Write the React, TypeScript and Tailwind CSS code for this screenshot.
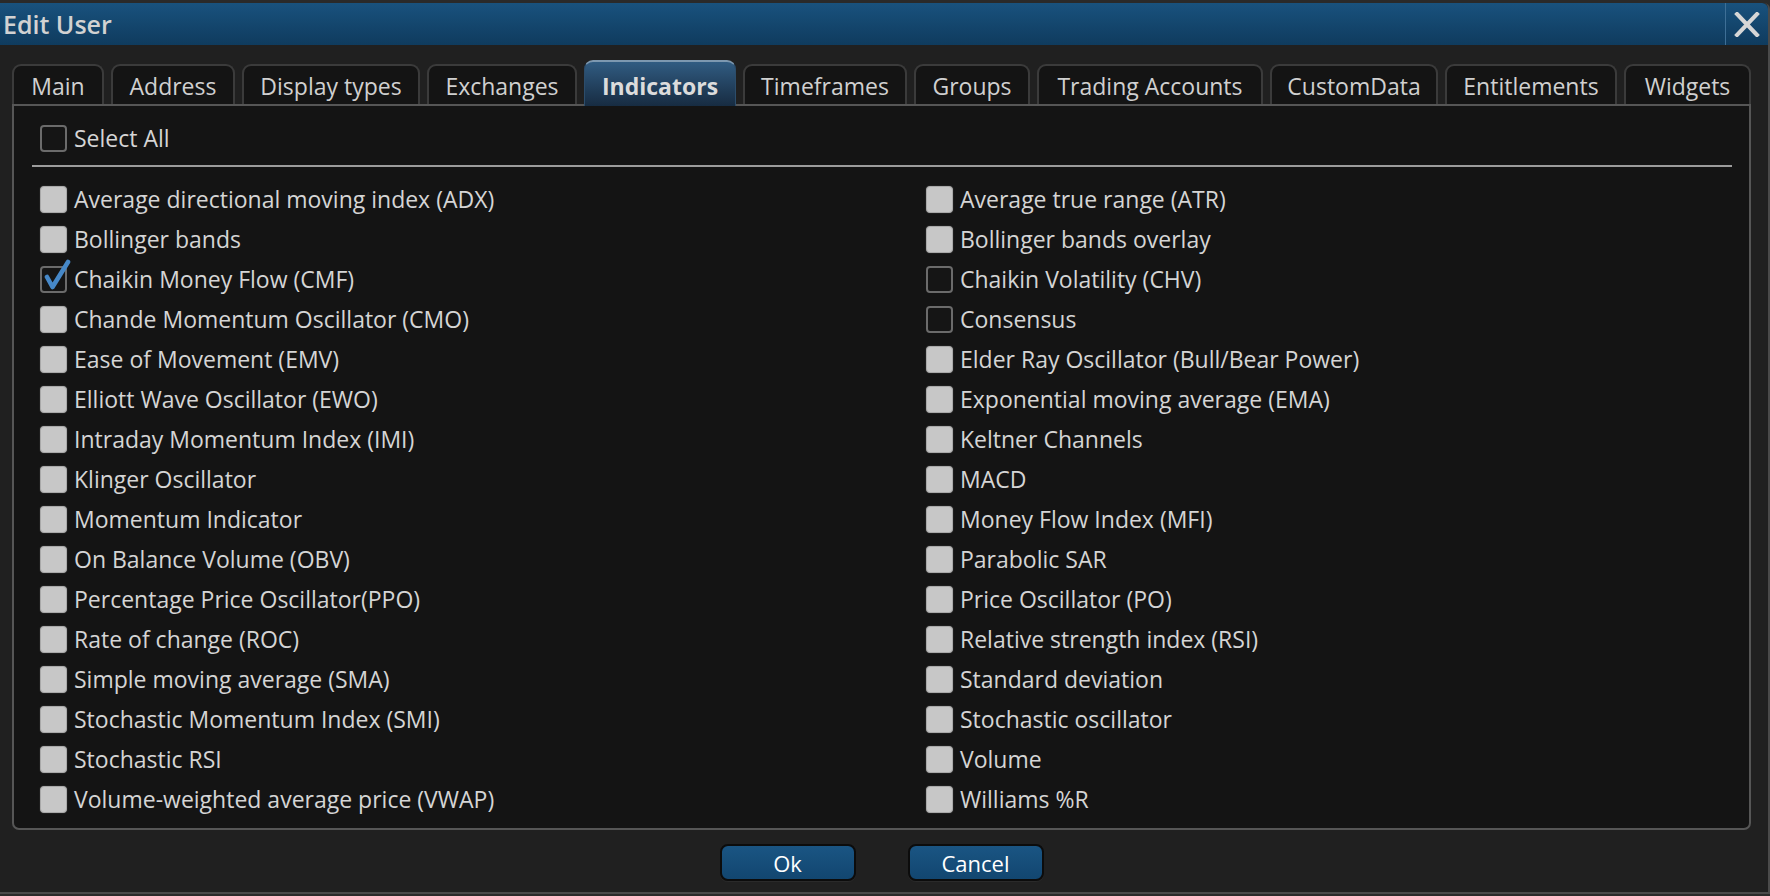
import React from "react";

type BoxState = "off" | "on" | "locked";

const tabs: Array<{ label: string; width: string; active?: boolean }> = [
  { label: "Main", width: "w-[92px]" },
  { label: "Address", width: "w-[124px]" },
  { label: "Display types", width: "w-[178px]" },
  { label: "Exchanges", width: "w-[150px]" },
  { label: "Indicators", width: "w-[152px]", active: true },
  { label: "Timeframes", width: "w-[164px]" },
  { label: "Groups", width: "w-[116px]" },
  { label: "Trading Accounts", width: "w-[226px]" },
  { label: "CustomData", width: "w-[168px]" },
  { label: "Entitlements", width: "w-[172px]" },
  { label: "Widgets", width: "w-[127px]" }
];

// left / right column, read row by row
const rows: Array<[string, BoxState, string, BoxState]> = [
  ["Average directional moving index (ADX)", "locked", "Average true range (ATR)", "locked"],
  ["Bollinger bands", "locked", "Bollinger bands overlay", "locked"],
  ["Chaikin Money Flow (CMF)", "on", "Chaikin Volatility (CHV)", "off"],
  ["Chande Momentum Oscillator (CMO)", "locked", "Consensus", "off"],
  ["Ease of Movement (EMV)", "locked", "Elder Ray Oscillator (Bull/Bear Power)", "locked"],
  ["Elliott Wave Oscillator (EWO)", "locked", "Exponential moving average (EMA)", "locked"],
  ["Intraday Momentum Index (IMI)", "locked", "Keltner Channels", "locked"],
  ["Klinger Oscillator", "locked", "MACD", "locked"],
  ["Momentum Indicator", "locked", "Money Flow Index (MFI)", "locked"],
  ["On Balance Volume (OBV)", "locked", "Parabolic SAR", "locked"],
  ["Percentage Price Oscillator(PPO)", "locked", "Price Oscillator (PO)", "locked"],
  ["Rate of change (ROC)", "locked", "Relative strength index (RSI)", "locked"],
  ["Simple moving average (SMA)", "locked", "Standard deviation", "locked"],
  ["Stochastic Momentum Index (SMI)", "locked", "Stochastic oscillator", "locked"],
  ["Stochastic RSI", "locked", "Volume", "locked"],
  ["Volume-weighted average price (VWAP)", "locked", "Williams %R", "locked"]
];

function Box({ state }: { state: BoxState }) {
  if (state === "locked") {
    return (
      <div className="w-[27px] h-[27px] flex-shrink-0 rounded-[4px] bg-[#c7c7c7] border border-[#a9a9a9] shadow-[0_0_1px_#777]" />
    );
  }
  return (
    <div className="relative w-[27px] h-[27px] flex-shrink-0 rounded-[4px] bg-[#151515] border-2 border-[#6b6b6b]">
      {state === "on" && (
        <svg
          className="absolute left-[1px] top-[-9px]"
          width="28"
          height="34"
          viewBox="0 0 28 34"
          fill="none"
        >
          <path
            d="M4 18 L9.5 28 L25 3"
            stroke="#4688c8"
            strokeWidth="4.6"
            strokeLinejoin="round"
            strokeLinecap="round"
          />
        </svg>
      )}
    </div>
  );
}

function Item({ label, state }: { label: string; state: BoxState }) {
  return (
    <div className="h-[40px] flex items-center gap-[7px]">
      <Box state={state} />
      <span className="text-[23px] leading-none text-[#d5d5d5] whitespace-nowrap">{label}</span>
    </div>
  );
}

export default function App() {
  return (
    <div
      className="w-[1770px] h-[896px] bg-[#2a2a2a] pt-[3px] overflow-hidden"
      style={{ fontFamily: '"Open Sans", "Noto Sans", sans-serif' }}
    >
      <div className="h-[891px] bg-[#202020] border-r-2 border-b-2 border-[#4a4a4a] rounded-tr-[6px] flex flex-col">
        {/* title bar */}
        <div className="h-[42px] flex items-center bg-gradient-to-b from-[#19527e] to-[#0f3b5e] rounded-tr-[6px]">
          <div className="flex-1 pl-[3px] text-[25px] font-semibold text-[#d2d2d2] leading-none">Edit User</div>
          <div className="w-[43px] h-full flex items-center justify-center border-l border-[#3e6f96]">
            <svg width="26" height="25" viewBox="0 0 26 25">
              <path d="M3 2 L23 23 M23 2 L3 23" stroke="#d6d6d6" strokeWidth="4" strokeLinecap="square" />
            </svg>
          </div>
        </div>

        {/* tabs */}
        <div className="flex items-end gap-[7px] pl-[12px] pt-[15px] h-[59px]">
          {tabs.map((t) =>
            t.active ? (
              <div
                key={t.label}
                className={`${t.width} relative z-10 h-[46px] mb-[-2px] flex items-center justify-center rounded-t-[9px] border-t-2 border-x border-[#7d98b0] border-x-[#2c4d6b] bg-gradient-to-b from-[#315c82] to-[#172c42] text-[23px] font-bold text-[#dcdcdc] leading-none pt-[4px]`}
              >
                {t.label}
              </div>
            ) : (
              <div
                key={t.label}
                className={`${t.width} h-[40px] flex items-center justify-center rounded-t-[9px] border-2 border-b-0 border-[#3b3b3b] bg-[#141414] text-[23px] text-[#d0d0d0] leading-none pt-[2px]`}
              >
                {t.label}
              </div>
            )
          )}
        </div>

        {/* panel */}
        <div className="ml-[12px] w-[1739px] h-[726px] bg-[#141414] border-2 border-[#565656] rounded-b-[7px] pt-[12px] pl-[26px] pr-[17px]">
          <div className="h-[40px] flex items-center gap-[7px]">
            <Box state="off" />
            <span className="text-[23px] leading-none text-[#d5d5d5]">Select All</span>
          </div>
          <div className="ml-[-8px] mt-[7px] h-[2px] bg-[#9c9c9c]" />
          <div className="mt-[12px] grid grid-cols-[886px_1fr]">
            {rows.map(([l, ls, r, rs]) => (
              <React.Fragment key={l}>
                <Item label={l} state={ls} />
                <Item label={r} state={rs} />
              </React.Fragment>
            ))}
          </div>
        </div>

        {/* buttons */}
        <div className="mt-[14px] ml-[12px] w-[1739px] flex justify-center gap-[52px]">
          {["Ok", "Cancel"].map((b) => (
            <button
              key={b}
              type="button"
              className="w-[136px] h-[37px] rounded-[8px] border-2 border-[#0c0c0c] bg-gradient-to-b from-[#1a5583] to-[#124670] text-[22px] text-white leading-none shadow-[0_1px_0_#2a2a2a]"
            >
              {b}
            </button>
          ))}
        </div>
      </div>
    </div>
  );
}
